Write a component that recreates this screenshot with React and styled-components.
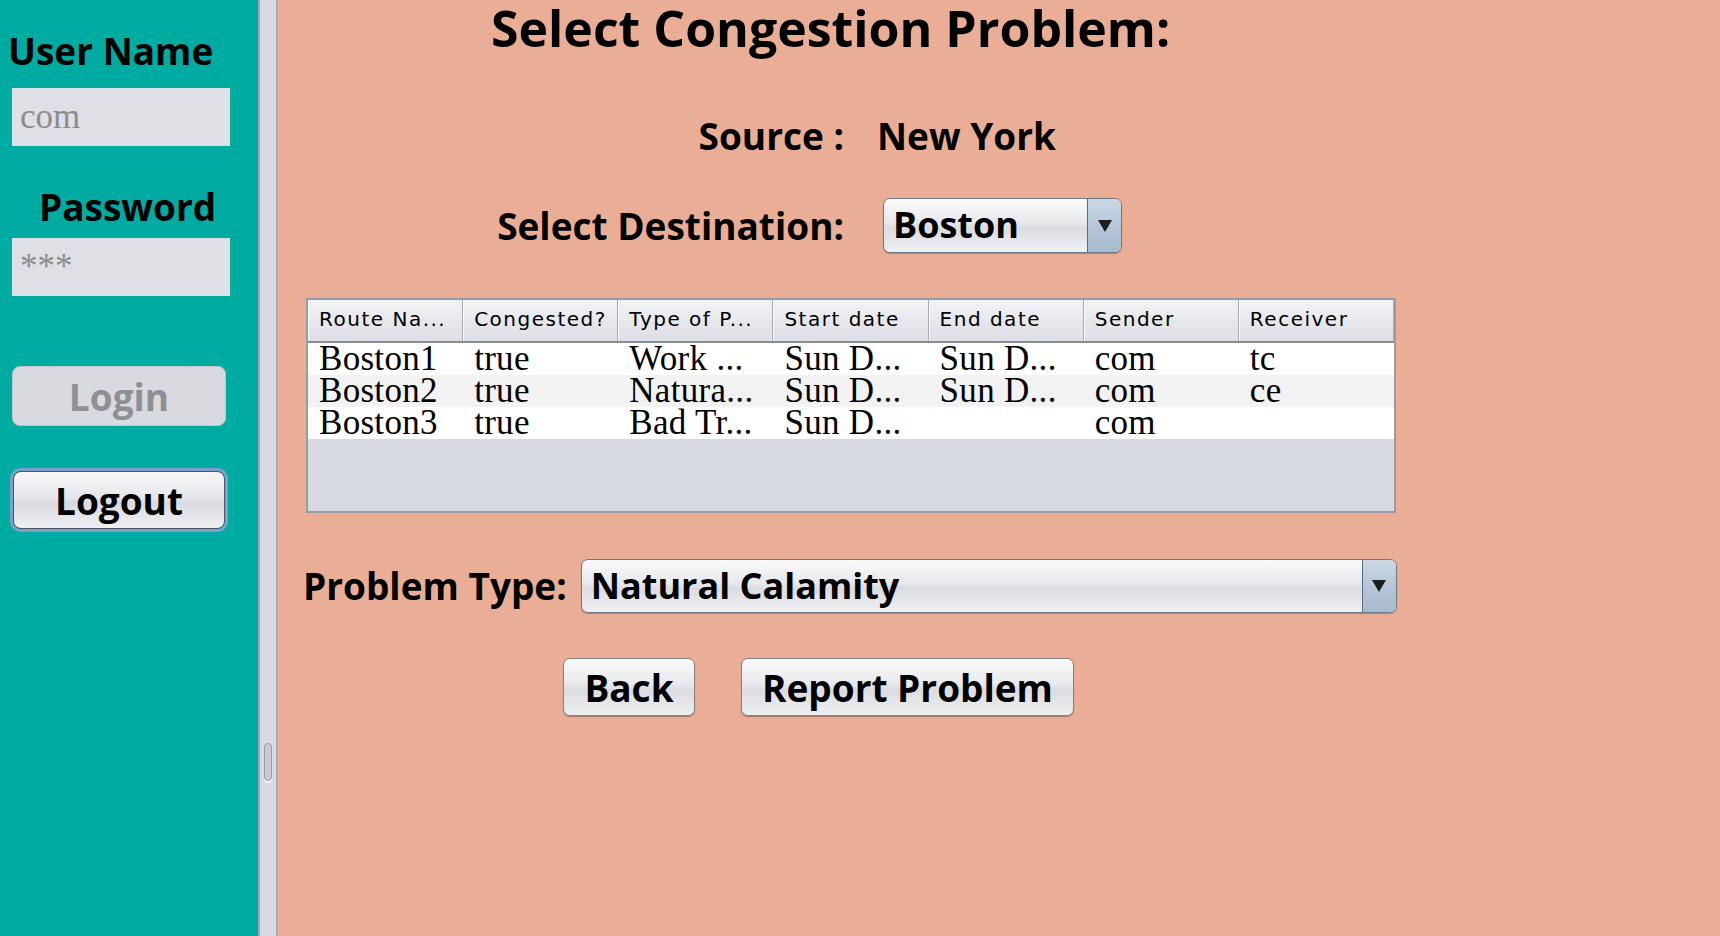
import React from 'react';
import styled, {createGlobalStyle} from 'styled-components';

const GlobalStyle = createGlobalStyle`
  html, body {
    margin: 0;
    padding: 0;
    height: 100%;
  }
  #root {
    height: 100%;
  }
  body {
    font-family: "Open Sans", "DejaVu Sans", sans-serif;
    color: #000;
  }
`;

const Page = styled.div`
  display: flex;
  width: 1720px;
  height: 936px;
  overflow: hidden;
`;

/* ---------- left login panel ---------- */

const Sidebar = styled.div`
  width: 258px;
  flex-shrink: 0;
  box-sizing: border-box;
  background: #00aba1;
  display: flex;
  flex-direction: column;
  align-items: flex-start;
  padding: 29px 0 0 8px;
`;

const SideLabel = styled.div`
  font-family: "Open Sans", sans-serif;
  font-weight: 700;
  font-size: 37px;
  line-height: 44px;
  margin-left: ${p => p.$indent || 0}px;
  margin-top: ${p => p.$top || 0}px;
`;

const SideInput = styled.div`
  width: 218px;
  height: 58px;
  box-sizing: border-box;
  margin-left: 4px;
  margin-top: ${p => p.$top || 0}px;
  padding-left: 8px;
  background: #dfe0e5;
  font-family: "Liberation Serif", serif;
  font-size: 35px;
  line-height: 58px;
  color: #8d8d8f;
`;

const SideButton = styled.div`
  box-sizing: border-box;
  width: ${p => p.$width}px;
  height: ${p => p.$height}px;
  margin-left: ${p => p.$left}px;
  margin-top: ${p => p.$top}px;
  display: flex;
  align-items: center;
  justify-content: center;
  border-radius: 8px;
  font-family: "Open Sans", sans-serif;
  font-weight: 700;
  font-size: 37px;
  color: ${p => (p.$disabled ? '#8f9094' : '#000')};
  border: 1px solid ${p => (p.$disabled ? '#c3c5cb' : '#4f555e')};
  background: ${p =>
    p.$disabled
      ? '#d8dae0'
      : 'linear-gradient(to bottom, #f7f7f9 0%, #e6e7eb 45%, #d9dadf 55%, #eff0f4 100%)'};
  box-shadow: ${p => (p.$focused ? '0 0 0 3px #7aa0cd' : 'none')};
`;

/* ---------- split pane divider ---------- */

const Divider = styled.div`
  width: 20px;
  flex-shrink: 0;
  box-sizing: border-box;
  background: #d7dae1;
  border-left: 2px solid #a2a5ac;
  border-right: 2px solid #a6a9b0;
  display: flex;
  flex-direction: column;
  align-items: center;
  padding-top: 743px;
`;

const Grip = styled.div`
  width: 8px;
  height: 38px;
  box-sizing: border-box;
  border: 1px solid #9a9da5;
  border-radius: 4px;
  background: #c9ccd3;
  box-shadow: 0 2px 0 #f4f5f7;
`;

/* ---------- main form ---------- */

const Main = styled.div`
  flex: 1;
  background: #e9ae95;
  display: flex;
  flex-direction: column;
  align-items: flex-start;
  padding-left: 28px;
`;

const Title = styled.div`
  font-weight: 700;
  font-size: 50px;
  line-height: 56px;
  margin-left: 185px;
  white-space: nowrap;
`;

const FormGrid = styled.div`
  display: grid;
  grid-template-columns: 538px auto;
  column-gap: 33px;
  row-gap: 40px;
  align-items: center;
  margin-top: 58px;
`;

const FieldLabel = styled.div`
  font-weight: 700;
  font-size: 37px;
  line-height: 44px;
  text-align: ${p => (p.$right ? 'right' : 'left')};
  white-space: nowrap;
`;

const Combo = styled.div`
  width: ${p => p.$width}px;
  height: ${p => p.$height || 54}px;
  margin-left: ${p => p.$left || 0}px;
  box-sizing: border-box;
  display: flex;
  border: 1px solid #6f7885;
  border-radius: 7px;
  overflow: hidden;
  background: linear-gradient(to bottom, #fbfbfc 0%, #e7e8ec 45%, #dadce1 55%, #eef0f4 100%);
  box-shadow: 0 1px 1px rgba(0, 0, 0, 0.25);
`;

const ComboText = styled.div`
  flex: 1;
  padding-left: 9px;
  font-weight: 700;
  font-size: 36px;
  line-height: 52px;
  white-space: nowrap;
`;

const ComboArrow = styled.div`
  width: 33px;
  flex-shrink: 0;
  border-left: 1px solid #5c6a7a;
  background: linear-gradient(to bottom, #cbd8e5 0%, #b4c6d8 50%, #a6bbcf 100%);
  display: flex;
  align-items: center;
  justify-content: center;
`;

const TableBox = styled.div`
  width: 1090px;
  height: 215px;
  box-sizing: border-box;
  margin-top: 45px;
  border: 2px solid #979ba3;
  background: #d6d9e0;
  display: flex;
  flex-direction: column;
`;

const TableHeader = styled.div`
  display: grid;
  grid-template-columns: repeat(7, 1fr);
  height: 41px;
  border-bottom: 2px solid #888c94;
  background: linear-gradient(to bottom, #f2f3f6 0%, #e6e8ec 50%, #dcdfe5 100%);
`;

const HeadCell = styled.div`
  padding-left: 11px;
  border-right: 1px solid #a7abb2;
  box-shadow: inset 1px 0 0 #f8f9fa;
  font-family: "DejaVu Sans", sans-serif;
  font-size: 20px;
  letter-spacing: 1.5px;
  line-height: 38px;
  white-space: nowrap;
  overflow: hidden;
`;

const TableRow = styled.div`
  display: grid;
  grid-template-columns: repeat(7, 1fr);
  height: 32px;
  background: ${p => (p.$alt ? '#f2f2f2' : '#ffffff')};
`;

const Cell = styled.div`
  padding-left: 11px;
  font-family: "Liberation Serif", serif;
  font-size: 35px;
  letter-spacing: 0.3px;
  line-height: 32px;
  white-space: nowrap;
  overflow: hidden;
`;

const ProblemRow = styled.div`
  display: flex;
  align-items: center;
  margin-top: 46px;
  margin-left: -3px;
  gap: 14px;
`;

const ButtonRow = styled.div`
  display: flex;
  gap: 46px;
  margin-top: 45px;
  margin-left: 257px;
`;

const Button = styled.div`
  width: ${p => p.$width}px;
  height: 58px;
  box-sizing: border-box;
  display: flex;
  align-items: center;
  justify-content: center;
  border: 1px solid #7e8289;
  border-radius: 7px;
  background: linear-gradient(to bottom, #fafafb 0%, #e8e9ec 45%, #dadce0 55%, #eef0f3 100%);
  box-shadow: 0 1px 1px rgba(0, 0, 0, 0.3);
  font-weight: 700;
  font-size: 37px;
  white-space: nowrap;
`;

const DownArrow = () => (
  <svg width="14" height="12" viewBox="0 0 14 12">
    <polygon points="0,0 14,0 7,12" fill="#1d1d1d" />
  </svg>
);

const columns = ['Route Na...', 'Congested?', 'Type of P...', 'Start date', 'End date', 'Sender', 'Receiver'];

const rows = [
  ['Boston1', 'true', 'Work ...', 'Sun D...', 'Sun D...', 'com', 'tc'],
  ['Boston2', 'true', 'Natura...', 'Sun D...', 'Sun D...', 'com', 'ce'],
  ['Boston3', 'true', 'Bad Tr...', 'Sun D...', '', 'com', ''],
];

const App = () => {
  return (
    <Page>
      <GlobalStyle />
      <Sidebar>
        <SideLabel>User Name</SideLabel>
        <SideInput $top={15}>com</SideInput>
        <SideLabel $indent={31} $top={39}>Password</SideLabel>
        <SideInput $top={9}>***</SideInput>
        <SideButton $disabled $width={214} $height={60} $left={4} $top={70}>Login</SideButton>
        <SideButton $focused $width={212} $height={58} $left={5} $top={45}>Logout</SideButton>
      </Sidebar>

      <Divider>
        <Grip />
      </Divider>

      <Main>
        <Title>Select Congestion Problem:</Title>

        <FormGrid>
          <FieldLabel $right>Source :</FieldLabel>
          <FieldLabel>New York</FieldLabel>
          <FieldLabel $right>Select Destination:</FieldLabel>
          <Combo $width={239} $height={55} $left={6}>
            <ComboText>Boston</ComboText>
            <ComboArrow><DownArrow /></ComboArrow>
          </Combo>
        </FormGrid>

        <TableBox>
          <TableHeader>
            {columns.map(c => <HeadCell key={c}>{c}</HeadCell>)}
          </TableHeader>
          {rows.map((r, i) => (
            <TableRow key={i} $alt={i % 2 === 1}>
              {r.map((v, j) => <Cell key={j}>{v}</Cell>)}
            </TableRow>
          ))}
        </TableBox>

        <ProblemRow>
          <FieldLabel>Problem Type:</FieldLabel>
          <Combo $width={816}>
            <ComboText>Natural Calamity</ComboText>
            <ComboArrow><DownArrow /></ComboArrow>
          </Combo>
        </ProblemRow>

        <ButtonRow>
          <Button $width={132}>Back</Button>
          <Button $width={333}>Report Problem</Button>
        </ButtonRow>
      </Main>
    </Page>
  );
};

export default App;
